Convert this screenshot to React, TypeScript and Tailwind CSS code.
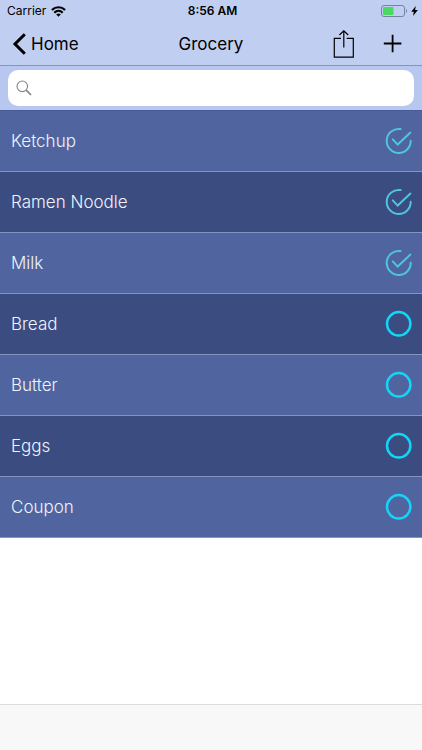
import { useState } from "react";

type Item = { name: string; done: boolean };

const initialItems: Item[] = [
  { name: "Ketchup", done: true },
  { name: "Ramen Noodle", done: true },
  { name: "Milk", done: true },
  { name: "Bread", done: false },
  { name: "Butter", done: false },
  { name: "Eggs", done: false },
  { name: "Coupon", done: false },
];

function StatusBar() {
  return (
    <div className="grid h-[22px] grid-cols-3 items-center pr-1 pl-[7px] text-[12px] leading-4">
      <div className="flex items-center gap-[5px]">
        <span>Carrier</span>
        <svg width="15" height="11" viewBox="0 0 15 11" fill="none" stroke="#000" strokeWidth="2.2" aria-hidden="true">
          <path d="M0.9 4C4.6 0.3 10.4 0.3 14.1 4" />
          <path d="M3.3 6.7C5.7 4.3 9.3 4.3 11.7 6.7" />
          <path d="M7.5 10.8L5.2 8.5C6.5 7.3 8.5 7.3 9.8 8.5Z" fill="#000" stroke="none" />
        </svg>
      </div>
      <span className="text-center font-semibold">8:56 AM</span>
      <div className="flex items-center justify-end gap-[3px]">
        <svg width="27" height="12" viewBox="0 0 27 12" aria-hidden="true">
          <rect x="0.5" y="0.5" width="23" height="11" rx="2.5" fill="none" stroke="#7483a0" />
          <rect x="2" y="2" width="10.5" height="8" rx="1" fill="#4bd964" />
          <path d="M25 4V8C26.4 7.4 26.4 4.6 25 4Z" fill="#7483a0" />
        </svg>
        <svg width="7" height="10" viewBox="0 0 7 10" aria-hidden="true">
          <path d="M4.8 0L0.2 5.8H2.8L2 10L6.9 4.1H4.1Z" fill="#000" />
        </svg>
      </div>
    </div>
  );
}

function NavBar() {
  return (
    <div className="grid h-11 grid-cols-3 items-center border-b border-[#8494bd] px-3 text-[17px] leading-6">
      <button type="button" className="flex items-center gap-1">
        <svg width="15" height="22" viewBox="0 0 15 22" fill="none" stroke="#000" strokeWidth="3" aria-hidden="true">
          <path d="M12.8 1.2L3 11L12.8 20.8" />
        </svg>
        Home
      </button>
      <h1 className="text-center">Grocery</h1>
      <div className="flex items-center justify-end gap-7 pr-[7px]">
        <button type="button" aria-label="Share">
          <svg width="22" height="28" viewBox="0 0 22 28" fill="none" stroke="#000" strokeWidth="1.2" aria-hidden="true">
            <path d="M8 8.4H1.3V27.2H20.3V8.4H13.6" />
            <path d="M10.8 17.5V0.8M6.4 5L10.8 0.8L15.2 5" />
          </svg>
        </button>
        <button type="button" aria-label="Add">
          <svg width="20" height="20" viewBox="0 0 20 20" fill="none" stroke="#000" strokeWidth="1.8" aria-hidden="true">
            <path d="M9.6 0.8V18.2M0.8 9.5H18.4" />
          </svg>
        </button>
      </div>
    </div>
  );
}

function CheckMark({ done }: { done: boolean }) {
  return done ? (
    <svg width="28" height="28" viewBox="0 0 28 28" fill="none" stroke="#4fc5df" strokeWidth="2" aria-hidden="true">
      <path d="M15.5 2.1A12 12 0 1 0 25.7 13.7" strokeLinecap="round" />
      <path d="M7.8 12.4L12.7 17.6L25.4 5.6" strokeLinecap="round" />
    </svg>
  ) : (
    <svg width="28" height="28" viewBox="0 0 28 28" fill="none" stroke="#14d5f6" strokeWidth="2.5" aria-hidden="true">
      <circle cx="13.7" cy="13.8" r="11.7" />
    </svg>
  );
}

export default function App() {
  const [items, setItems] = useState(initialItems);
  const toggle = (name: string) =>
    setItems(items.map((item) => (item.name === name ? { ...item, done: !item.done } : item)));

  return (
    <div className="flex min-h-screen flex-col bg-white font-['Inter','Liberation_Sans',sans-serif] text-black">
      <header className="bg-[#c0cff1]">
        <StatusBar />
        <NavBar />
      </header>
      <div className="bg-[#b8c7ef] px-2 py-1">
        <label className="flex h-9 items-center gap-2 rounded-[10px] bg-white px-2">
          <svg width="16" height="16" viewBox="0 0 16 16" fill="none" stroke="#85858a" aria-hidden="true">
            <circle cx="6.3" cy="6.3" r="5.3" strokeWidth="1.1" />
            <path d="M10.2 10.2L15 15" strokeWidth="1.7" />
          </svg>
          <input type="search" aria-label="Search" className="min-w-0 flex-1 bg-transparent text-[17px] outline-none" />
        </label>
      </div>
      <ul className="flex-1">
        {items.map((item) => (
          <li
            key={item.name}
            className="border-t border-[#8393c4] bg-[#50659f] first:border-[#465a98] last:border-b even:bg-[#3b4c80]"
          >
            <label className="flex h-[60px] items-center justify-between pr-[9px] pl-[11px] text-[17px] leading-6 font-light text-[#eef3fd]">
              {item.name}
              <span className="grid">
                <input
                  type="checkbox"
                  checked={item.done}
                  onChange={() => toggle(item.name)}
                  className="col-start-1 row-start-1 size-7 appearance-none rounded-full"
                />
                <span className="pointer-events-none col-start-1 row-start-1">
                  <CheckMark done={item.done} />
                </span>
              </span>
            </label>
          </li>
        ))}
      </ul>
      <footer className="h-[46px] border-t border-[#dcdcdc] bg-[#f8f8f8]" />
    </div>
  );
}
